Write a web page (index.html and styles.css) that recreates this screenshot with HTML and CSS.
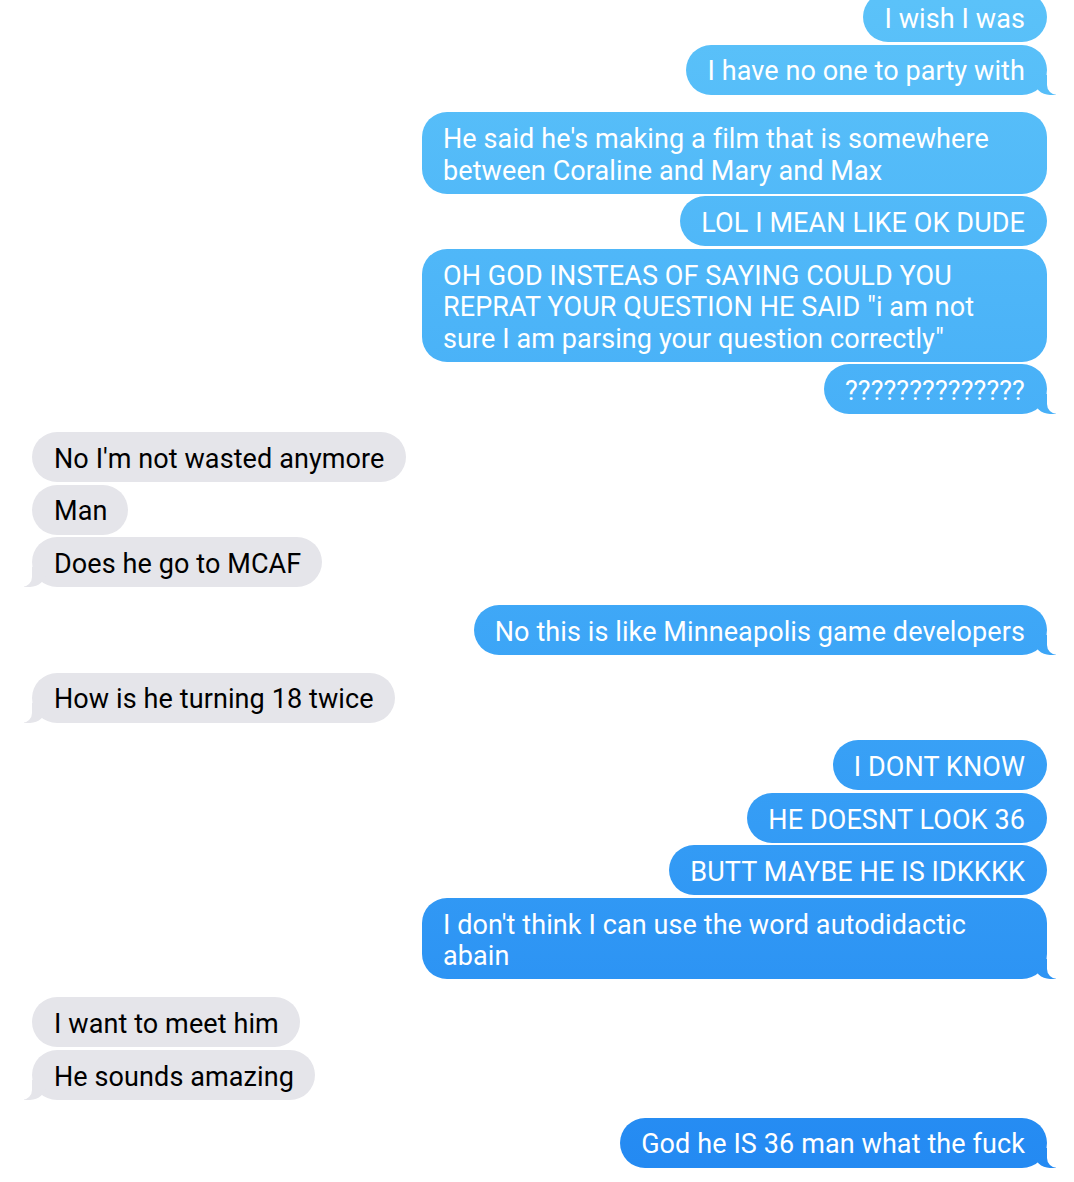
FILE: index.html
```html
<!DOCTYPE html>
<html lang="en">
<head>
<meta charset="utf-8">
<title>Messages</title>
<link rel="stylesheet" href="styles.css">
</head>
<body>
<div class="thread">
  <div class="group out-group">
    <div class="msg out">I wish I was</div>
    <div class="msg out tail">I have no one to party with</div>
  </div>
  <div class="group out-group">
    <div class="msg out wide">He said he's making a film that is somewhere<br>between Coraline and Mary and Max</div>
    <div class="msg out">LOL I MEAN LIKE OK DUDE</div>
    <div class="msg out wide">OH GOD INSTEAS OF SAYING COULD YOU<br>REPRAT YOUR QUESTION HE SAID "i am not<br>sure I am parsing your question correctly"</div>
    <div class="msg out tail">??????????????</div>
  </div>
  <div class="group in-group">
    <div class="msg in">No I'm not wasted anymore</div>
    <div class="msg in">Man</div>
    <div class="msg in tail">Does he go to MCAF</div>
  </div>
  <div class="group out-group">
    <div class="msg out tail">No this is like Minneapolis game developers</div>
  </div>
  <div class="group in-group">
    <div class="msg in tail">How is he turning 18 twice</div>
  </div>
  <div class="group out-group">
    <div class="msg out">I DONT KNOW</div>
    <div class="msg out">HE DOESNT LOOK 36</div>
    <div class="msg out">BUTT MAYBE HE IS IDKKKK</div>
    <div class="msg out wide tail">I don't think I can use the word autodidactic<br>abain</div>
  </div>
  <div class="group in-group">
    <div class="msg in">I want to meet him</div>
    <div class="msg in tail">He sounds amazing</div>
  </div>
  <div class="group out-group">
    <div class="msg out tail">God he IS 36 man what the fuck</div>
  </div>
</div>
</body>
</html>
```

FILE: styles.css
```css
html, body {
  margin: 0;
  padding: 0;
  background: #ffffff;
}

body {
  width: 1074px;
  height: 1182px;
  overflow: hidden;
  font-family: Roboto, "Liberation Sans", sans-serif;
}

.thread {
  display: flex;
  flex-direction: column;
  gap: 17.8px;
  margin-top: -8px;
  padding: 0 27px 0 32px;
}

.group {
  display: flex;
  flex-direction: column;
  gap: 2.5px;
}

.out-group {
  align-items: flex-end;
}

.in-group {
  align-items: flex-start;
}

.msg {
  position: relative;
  box-sizing: border-box;
  padding: 11.75px 22px 6.75px 21px;
  border-radius: 25px;
  font-size: 27px;
  line-height: 31.5px;
  letter-spacing: 0.1px;
  white-space: nowrap;
}

.out {
  color: #ffffff;
  background: linear-gradient(to bottom, #5bc2f9 0px, #3fa8f7 600px, #2389f2 1182px);
  background-attachment: fixed;
}

.in {
  padding: 11.75px 21px 6.75px 22px;
  color: #000000;
  background: #e5e5ea;
}

.wide {
  width: 625px;
}

.tail::before,
.tail::after {
  content: "";
  position: absolute;
  bottom: 0;
  height: 20px;
}

.out.tail::before {
  right: -9px;
  width: 22px;
  background: linear-gradient(to bottom, #5bc2f9 0px, #3fa8f7 600px, #2389f2 1182px);
  background-attachment: fixed;
  border-bottom-left-radius: 16px 15px;
}

.out.tail::after {
  right: -13px;
  width: 13px;
  background: #ffffff;
  border-bottom-left-radius: 10px;
}

.in.tail::before {
  left: -8px;
  width: 22px;
  background: #e5e5ea;
  border-bottom-right-radius: 16px 15px;
}

.in.tail::after {
  left: -13px;
  width: 13px;
  background: #ffffff;
  border-bottom-right-radius: 10px;
}
```
